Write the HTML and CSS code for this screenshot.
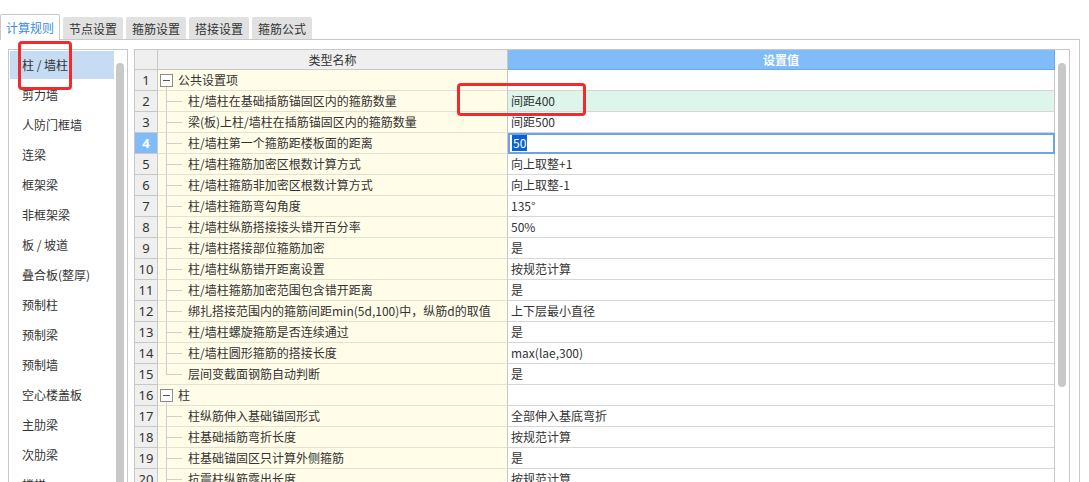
FILE: index.html
```html
<!DOCTYPE html>
<html lang="zh-CN">
<head>
<meta charset="utf-8">
<title>计算规则</title>
<link rel="stylesheet" href="styles.css">
</head>
<body>
<div class="page">
  <div class="tabs">
    <div class="tab active">计算规则</div>
    <div class="tab">节点设置</div>
    <div class="tab">箍筋设置</div>
    <div class="tab">搭接设置</div>
    <div class="tab">箍筋公式</div>
  </div>
  <div class="frame">
    <div class="list">
      <ul class="items">
        <li class="item sel">柱 / 墙柱</li>
        <li class="item">剪力墙</li>
        <li class="item">人防门框墙</li>
        <li class="item">连梁</li>
        <li class="item">框架梁</li>
        <li class="item">非框架梁</li>
        <li class="item">板 / 坡道</li>
        <li class="item">叠合板(整厚)</li>
        <li class="item">预制柱</li>
        <li class="item">预制梁</li>
        <li class="item">预制墙</li>
        <li class="item">空心楼盖板</li>
        <li class="item">主肋梁</li>
        <li class="item">次肋梁</li>
        <li class="item">楼梯</li>
      </ul>
      <div class="lscroll"><div class="lthumb"></div></div>
    </div>
    <div class="table">
      <div class="grid">
        <div class="row head">
          <div class="num hnum"></div>
          <div class="hname">类型名称</div>
          <div class="hval">设置值</div>
        </div>
        <div class="row"><div class="num">1</div><div class="name group"><span class="toggle"></span>公共设置项</div><div class="val"></div></div>
        <div class="row"><div class="num">2</div><div class="name child">柱/墙柱在基础插筋锚固区内的箍筋数量</div><div class="val green">间距400</div></div>
        <div class="row"><div class="num">3</div><div class="name child">梁(板)上柱/墙柱在插筋锚固区内的箍筋数量</div><div class="val">间距500</div></div>
        <div class="row"><div class="num cur">4</div><div class="name child">柱/墙柱第一个箍筋距楼板面的距离</div><div class="val edit"><span class="selected">50</span></div></div>
        <div class="row"><div class="num">5</div><div class="name child">柱/墙柱箍筋加密区根数计算方式</div><div class="val">向上取整+1</div></div>
        <div class="row"><div class="num">6</div><div class="name child">柱/墙柱箍筋非加密区根数计算方式</div><div class="val">向上取整-1</div></div>
        <div class="row"><div class="num">7</div><div class="name child">柱/墙柱箍筋弯勾角度</div><div class="val">135°</div></div>
        <div class="row"><div class="num">8</div><div class="name child">柱/墙柱纵筋搭接接头错开百分率</div><div class="val">50%</div></div>
        <div class="row"><div class="num">9</div><div class="name child">柱/墙柱搭接部位箍筋加密</div><div class="val">是</div></div>
        <div class="row"><div class="num">10</div><div class="name child">柱/墙柱纵筋错开距离设置</div><div class="val">按规范计算</div></div>
        <div class="row"><div class="num">11</div><div class="name child">柱/墙柱箍筋加密范围包含错开距离</div><div class="val">是</div></div>
        <div class="row"><div class="num">12</div><div class="name child">绑扎搭接范围内的箍筋间距min(5d,100)中，纵筋d的取值</div><div class="val">上下层最小直径</div></div>
        <div class="row"><div class="num">13</div><div class="name child">柱/墙柱螺旋箍筋是否连续通过</div><div class="val">是</div></div>
        <div class="row"><div class="num">14</div><div class="name child">柱/墙柱圆形箍筋的搭接长度</div><div class="val">max(lae,300)</div></div>
        <div class="row"><div class="num">15</div><div class="name child last">层间变截面钢筋自动判断</div><div class="val">是</div></div>
        <div class="row"><div class="num">16</div><div class="name group"><span class="toggle"></span>柱</div><div class="val"></div></div>
        <div class="row"><div class="num">17</div><div class="name child">柱纵筋伸入基础锚固形式</div><div class="val">全部伸入基底弯折</div></div>
        <div class="row"><div class="num">18</div><div class="name child">柱基础插筋弯折长度</div><div class="val">按规范计算</div></div>
        <div class="row"><div class="num">19</div><div class="name child">柱基础锚固区只计算外侧箍筋</div><div class="val">是</div></div>
        <div class="row"><div class="num">20</div><div class="name child">抗震柱纵筋露出长度</div><div class="val">按规范计算</div></div>
      </div>
      <div class="vscroll"><div class="vthumb"></div></div>
    </div>
  </div>
  <div class="mark mark1"></div>
  <div class="mark mark2"></div>
</div>
</body>
</html>
```

FILE: styles.css
```css
body {
  margin: 0;
  background: #fff;
  font-family: "Noto Sans CJK SC", "Microsoft YaHei", sans-serif;
  font-size: 12px;
  color: #333;
}

.page {
  position: relative;
  width: 1089px;
  height: 482px;
  overflow: hidden;
}

/* tabs */
.tabs {
  display: flex;
  align-items: flex-end;
  gap: 3px;
  width: 1080px;
  height: 40px;
  box-sizing: border-box;
  background: linear-gradient(#c8c8c8, #c8c8c8) left bottom / 100% 1px no-repeat;
}

.tab {
  width: 60px;
  height: 22px;
  margin-bottom: 1px;
  box-sizing: border-box;
  background: #e1e1e1;
  border-radius: 2px 2px 0 0;
  display: flex;
  align-items: center;
  justify-content: center;
  color: #333;
}

.tab.active {
  height: 26px;
  margin-bottom: 0;
  background: #fff;
  border: 1px solid #c8c8c8;
  border-bottom: none;
  color: #3a8de4;
}

/* frame */
.frame {
  display: flex;
  gap: 6px;
  width: 1080px;
  height: 442px;
  box-sizing: border-box;
  border-right: 1px solid #c8c8c8;
  padding: 9px 0 0 8px;
  overflow: hidden;
}

/* left list */
.list {
  flex: none;
  width: 120px;
  height: 470px;
  box-sizing: border-box;
  border: 1px solid #c8c8c8;
  display: flex;
}

.items {
  list-style: none;
  margin: 0;
  padding: 1px 0 0 1px;
  width: 105px;
  box-sizing: border-box;
}

.item {
  height: 28px;
  line-height: 28px;
  margin-bottom: 2px;
  padding-left: 12px;
  white-space: nowrap;
  color: #333;
}

.item.sel {
  background: #c5dcf3;
}

.lscroll {
  width: 13px;
  padding-top: 13px;
}

.lthumb {
  width: 8px;
  height: 440px;
  margin-left: 2px;
  background: #c8c8c8;
  border-radius: 4px 4px 0 0;
}

/* table */
.table {
  flex: none;
  width: 936px;
  height: 470px;
  box-sizing: border-box;
  border: 1px solid #c8c8c8;
  display: flex;
}

.grid {
  width: 920px;
}

.row {
  display: grid;
  grid-template-columns: 23px 350px 547px;
  height: 21px;
}

.row > div {
  box-sizing: border-box;
  white-space: nowrap;
  overflow: hidden;
}

.row.head {
  height: 20px;
}

.num {
  background: #efefef;
  border-right: 1px solid #c8c8c8;
  border-bottom: 1px solid #c8c8c8;
  text-align: center;
  line-height: 20px;
  font-size: 13px;
  font-family: "Noto Sans", "Noto Sans CJK SC", sans-serif;
  color: #333;
}

.num.cur {
  background: #80bcf8;
  color: #fff;
  font-weight: bold;
}

.hname {
  background: #efefef;
  border-right: 1px solid #c8c8c8;
  border-bottom: 1px solid #c8c8c8;
  text-align: center;
  line-height: 19px;
}

.hval {
  background: #80bcf8;
  border-right: 1px solid #6caaec;
  border-bottom: 1px solid #6caaec;
  color: #fff;
  font-weight: bold;
  text-align: center;
  line-height: 19px;
}

.name {
  background-color: #fffce8;
  border-right: 1px solid #c8c8c8;
  border-bottom: 1px solid #e4e1d2;
  line-height: 20px;
  color: #333;
}

.name.child {
  padding-left: 30px;
  background-image: linear-gradient(#cfcfcf, #cfcfcf), linear-gradient(#cfcfcf, #cfcfcf);
  background-repeat: no-repeat;
  background-position: 8px 0, 8px 10px;
  background-size: 1px 100%, 16px 1px;
}

.name.child.last {
  background-size: 1px 11px, 16px 1px;
}

.name.group {
  display: flex;
  align-items: center;
  padding-left: 2px;
  background-image: linear-gradient(#cfcfcf, #cfcfcf);
  background-repeat: no-repeat;
  background-position: 8px 17px;
  background-size: 1px 4px;
}

.toggle {
  flex: none;
  width: 13px;
  height: 13px;
  box-sizing: border-box;
  border: 1px solid #8c8c8c;
  background: #fff;
  margin-right: 5px;
  display: flex;
  align-items: center;
  justify-content: center;
}

.toggle::before {
  content: "";
  width: 7px;
  height: 1px;
  background: #555;
}

.val {
  border-right: 1px solid #c8c8c8;
  border-bottom: 1px solid #d6d6d6;
  padding-left: 3px;
  line-height: 20px;
  color: #333;
}

.val.green {
  background: #ddf5eb;
}

.val.edit {
  outline: 2px solid #6aa6e4;
  outline-offset: -2px;
  padding-left: 4px;
}

.selected {
  background: #0a64d0;
  color: #fff;
  padding: 0 1px;
}

/* right scrollbar */
.vscroll {
  width: 14px;
  padding-top: 13px;
  box-sizing: border-box;
}

.vthumb {
  width: 8px;
  height: 324px;
  margin-left: 3px;
  background: #c8c8c8;
  border-radius: 4px;
}

/* red annotation marks */
.mark {
  position: absolute;
  box-sizing: border-box;
  border: 3px solid #f42a2a;
  border-radius: 4px;
}

.mark1 {
  left: 18px;
  top: 41px;
  width: 54px;
  height: 49px;
}

.mark2 {
  left: 457px;
  top: 83px;
  width: 129px;
  height: 33px;
}
```
